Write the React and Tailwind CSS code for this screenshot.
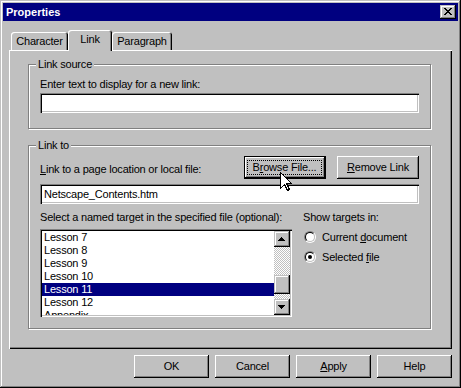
import React from "react";

const btnShadow =
  "shadow-[inset_-1px_-1px_0_#000,inset_1px_1px_0_#fff,inset_-2px_-2px_0_#808080]";
const sunken =
  "shadow-[inset_1px_1px_0_#808080,inset_2px_2px_0_#000,inset_-1px_-1px_0_#fff,inset_-2px_-2px_0_#c0c0c0]";
const scrollBtn =
  "shadow-[inset_-1px_-1px_0_#000,inset_1px_1px_0_#c0c0c0,inset_-2px_-2px_0_#808080,inset_2px_2px_0_#fff]";

function U({ children }) {
  return <span className="underline decoration-1 underline-offset-[1px]">{children}</span>;
}

function CloseGlyph() {
  const cells = [
    [0, 0, 2], [6, 0, 2],
    [1, 1, 2], [5, 1, 2],
    [2, 2, 4],
    [3, 3, 2],
    [2, 4, 4],
    [1, 5, 2], [5, 5, 2],
    [0, 6, 2], [6, 6, 2],
  ];
  return (
    <svg width="8" height="7" viewBox="0 0 8 7" shapeRendering="crispEdges">
      {cells.map(([x, y, w], i) => (
        <rect key={i} x={x} y={y} width={w} height="1" fill="#000" />
      ))}
    </svg>
  );
}

function Arrow({ down }) {
  const rows = [
    [3, 1],
    [2, 3],
    [1, 5],
    [0, 7],
  ];
  return (
    <svg width="7" height="4" viewBox="0 0 7 4" shapeRendering="crispEdges">
      {rows.map(([x, w], i) => (
        <rect key={i} x={x} y={down ? 3 - i : i} width={w} height="1" fill="#000" />
      ))}
    </svg>
  );
}

function Button({ children, w = "w-[75px]", isDefault = false }) {
  if (isDefault) {
    return (
      <div className={`${w} h-[23px] border border-black bg-[#c0c0c0] ${btnShadow} pl-[2px] pr-[3px] py-[3px] flex`}>
        <div className="flex-1 border border-dotted border-black flex items-center justify-center">
          {children}
        </div>
      </div>
    );
  }
  return (
    <div className={`${w} h-[23px] bg-[#c0c0c0] ${btnShadow} flex items-center justify-center pb-[1px]`}>
      {children}
    </div>
  );
}

function Radio({ checked }) {
  return (
    <div className="w-[12px] h-[12px] rounded-full border border-t-[#808080] border-l-[#808080] border-b-white border-r-white flex">
      <div className="flex-1 rounded-full border border-t-black border-l-black border-b-[#c0c0c0] border-r-[#c0c0c0] bg-white flex items-center justify-center">
        {checked && <div className="w-[4px] h-[4px] rounded-full bg-black" />}
      </div>
    </div>
  );
}

function GroupBox({ label, h, children }) {
  return (
    <div className={`w-[403px] ${h} border border-[#808080] shadow-[inset_1px_1px_0_#fff,1px_1px_0_#fff] flex flex-col px-[11px]`}>
      <div className="-mt-[7px] -ml-[4px] px-[2px] w-fit h-[13px] bg-[#c0c0c0]">{label}</div>
      {children}
    </div>
  );
}

export default function App() {
  const items = ["Lesson 7", "Lesson 8", "Lesson 9", "Lesson 10", "Lesson 11", "Lesson 12", "Appendix"];
  return (
    <div className="relative w-[461px] h-[388px] bg-[#c0c0c0] p-[3px] flex flex-col shadow-[inset_-1px_-1px_0_#000,inset_1px_1px_0_#c0c0c0,inset_-2px_-2px_0_#808080,inset_2px_2px_0_#fff] text-[11px] leading-[13px] tracking-[-0.2px] text-black font-['Liberation_Sans',Arial,sans-serif] overflow-hidden">
      {/* Title bar */}
      <div className="h-[18px] bg-[#000080] flex items-center justify-between pl-[3px] pr-[2px]">
        <span className="text-white font-bold text-[11px] tracking-[0px]">Properties</span>
        <div className={`w-[16px] h-[14px] bg-[#c0c0c0] ${scrollBtn} flex items-center justify-center pr-[1px] pb-[1px]`}>
          <CloseGlyph />
        </div>
      </div>

      {/* Tabs + panel */}
      <div className="px-[6px] pt-[9px] flex flex-col">
        <div className="h-[20px] flex items-end pl-[2px]">
          <div className="w-[57px] h-[18px] rounded-t-[3px] shadow-[inset_1px_1px_0_#fff,inset_-1px_0_0_#000,inset_-2px_0_0_#808080] flex justify-center pt-[3px]">
            Character
          </div>
          <div className="relative z-10 w-[44px] h-[21px] -mb-[1px] bg-[#c0c0c0] rounded-t-[3px] shadow-[inset_1px_1px_0_#fff,inset_-1px_0_0_#000,inset_-2px_0_0_#808080] flex justify-center pt-[3px]">
            Link
          </div>
          <div className="w-[60px] h-[18px] rounded-t-[3px] shadow-[inset_1px_1px_0_#fff,inset_-1px_0_0_#000,inset_-2px_0_0_#808080] flex justify-center pt-[3px]">
            Paragraph
          </div>
        </div>

        <div className="h-[299px] shadow-[inset_1px_1px_0_#fff,inset_-1px_-1px_0_#000,inset_-2px_-2px_0_#808080] pt-[14px] pl-[19px] flex flex-col">
          <GroupBox label="Link source" h="h-[65px]">
            <div className="mt-[7px]">Enter text to display for a new link:</div>
            <div className={`mt-[2px] h-[20px] bg-white ${sunken}`} />
          </GroupBox>

          <div className="h-[16px]" />

          <GroupBox label="Link to" h="h-[184px]">
            <div className="mt-[4px] flex items-start gap-[11px]">
              <div className="flex-1 pt-[7px]">
                <U>L</U>ink to a page location or local file:
              </div>
              <Button w="w-[82px]" isDefault>
                B<U>r</U>owse File...
              </Button>
              <Button w="w-[82px]">
                <U>R</U>emove Link
              </Button>
            </div>
            <div className={`mt-[5px] h-[20px] bg-white ${sunken} flex items-center pl-[4px]`}>
              Netscape_Contents.htm
            </div>
            <div className="mt-[7px] flex">
              <div className="w-[252px] flex flex-col">
                <div>Select a named target in the specified file (optional):</div>
                <div className={`mt-[5px] h-[88px] bg-white ${sunken} p-[2px] flex`}>
                  <div className="flex-1 flex flex-col overflow-hidden">
                    {items.map((it) => (
                      <div
                        key={it}
                        className={`h-[13px] shrink-0 pl-[2px] ${it === "Lesson 11" ? "bg-[#000080] text-white" : ""}`}
                      >
                        {it}
                      </div>
                    ))}
                  </div>
                  <div className="w-[16px] flex flex-col">
                    <div className={`h-[16px] bg-[#c0c0c0] ${scrollBtn} flex items-center justify-center pr-[1px] pb-[1px]`}>
                      <Arrow />
                    </div>
                    <div className="h-[28px] bg-[repeating-conic-gradient(#c0c0c0_0%_25%,#ffffff_0%_50%)] bg-[length:2px_2px]" />
                    <div className={`h-[19px] bg-[#c0c0c0] ${scrollBtn}`} />
                    <div className="h-[5px] bg-[repeating-conic-gradient(#c0c0c0_0%_25%,#ffffff_0%_50%)] bg-[length:2px_2px]" />
                    <div className={`h-[16px] bg-[#c0c0c0] ${scrollBtn} flex items-center justify-center pr-[1px] pb-[1px]`}>
                      <Arrow down />
                    </div>
                  </div>
                </div>
              </div>
              <div className="ml-[11px] flex flex-col">
                <div>Show targets in:</div>
                <div className="mt-[3px] h-[20px] flex items-center gap-[6px] pl-[1px]">
                  <Radio />
                  <span>
                    Current <U>d</U>ocument
                  </span>
                </div>
                <div className="h-[20px] flex items-center gap-[6px] pl-[1px]">
                  <Radio checked />
                  <span>
                    Selected <U>f</U>ile
                  </span>
                </div>
              </div>
            </div>
          </GroupBox>
        </div>
      </div>

      {/* Bottom buttons */}
      <div className="mt-[6px] px-[6px] flex justify-end gap-[6px]">
        <Button>OK</Button>
        <Button>Cancel</Button>
        <Button>
          <U>A</U>pply
        </Button>
        <Button>Help</Button>
      </div>

      {/* Mouse cursor */}
      <svg
        className="absolute left-[280px] top-[172px]"
        width="13"
        height="20"
        viewBox="0 0 13 20"
        shapeRendering="crispEdges"
      >
        <path d="M0.5 0.5 V16.5 L4.5 12.5 L7.5 18.5 L9.5 17.5 L6.5 11.5 H11.5 Z" fill="#fff" stroke="#000" strokeWidth="1" />
      </svg>
    </div>
  );
}
